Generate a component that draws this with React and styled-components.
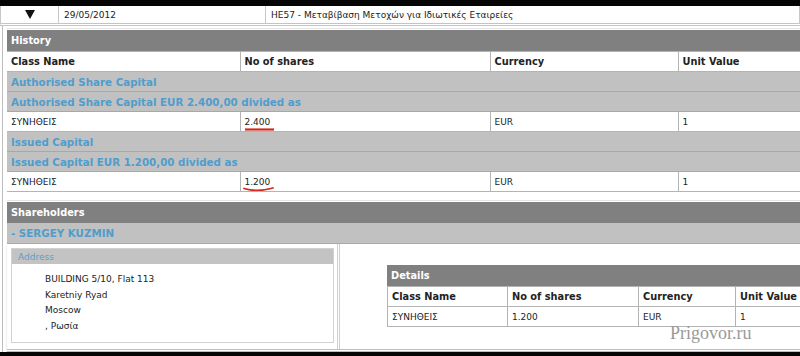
import styled, { createGlobalStyle } from 'styled-components'

const GlobalStyle = createGlobalStyle`
    html, body {
        margin: 0;
        padding: 0;
        background: #ffffff;
        overflow: hidden;
    }
    body {
        font-family: "DejaVu Sans", Verdana, sans-serif;
        font-size: 9px;
        color: #222;
    }
`

const Page = styled.div`
    width: 800px;
    height: 356px;
    display: flex;
    flex-direction: column;
    overflow: hidden;
`

const BlackBar = styled.div`
    height: ${p => p.$h}px;
    background: #050505;
    flex: none;
`

const TopRow = styled.div`
    display: grid;
    grid-template-columns: 58px 207px 1fr;
    height: 17px;
    border-left: 1px solid #c8c8c8;
    border-bottom: 3px double #c4c4c4;
    flex: none;
`

const TopCell = styled.div`
    display: flex;
    align-items: center;
    justify-content: ${p => (p.$center ? 'center' : 'flex-start')};
    padding-left: ${p => (p.$center ? 0 : 5)}px;
    border-right: 1px solid #c8c8c8;
    white-space: nowrap;
`

const Frame = styled.div`
    flex: 1;
    margin-left: 2px;
    border-left: 1px solid #bdbdbd;
    padding: 2px 0 0 4px;
    display: flex;
    flex-direction: column;
`

const Panel = styled.div`
    border-top: 1px solid #e4e4e4;
    padding-top: 1px;
`

const Header = styled.div`
    height: 21px;
    display: flex;
    align-items: center;
    padding-left: 4px;
    background: #808080;
    color: #fff;
    font-weight: bold;
    font-size: 9.8px;
`

const Table = styled.table`
    width: 100%;
    border-collapse: collapse;
    table-layout: fixed;
`

const Row = styled.tr`
    height: 20px;
    background: ${p => (p.$group ? '#c1c1c1' : '#fff')};
`

const Cell = styled.td`
    border: 1px solid ${p => (p.$group ? '#a8a8a8' : '#b4b4b4')};
    border-left: ${p => (p.$first ? 'none' : undefined)};
    border-right: ${p => (p.$last ? 'none' : undefined)};
    padding: 0 4px;
    white-space: nowrap;
    overflow: hidden;
    font-weight: ${p => (p.$bold ? 'bold' : 'normal')};
    font-size: ${p => (p.$blue ? '10.3px' : p.$bold ? '9.8px' : '9px')};
    color: ${p => (p.$blue ? '#4f9dcd' : '#222')};
    vertical-align: middle;
`

const Marked = styled.span`
    position: relative;
    display: inline-block;
`

const Stroke = styled.svg`
    position: absolute;
    left: -2px;
    top: 8px;
    overflow: visible;
`

const Gap = styled.div`
    height: 8px;
`

const Shareholder = styled.div`
    height: 20px;
    display: flex;
    align-items: center;
    padding-left: 4px;
    background: #c1c1c1;
    border-bottom: 1px solid #a8a8a8;
    color: #4f9dcd;
    font-weight: bold;
    font-size: 10.3px;
`

const Body = styled.div`
    display: grid;
    grid-template-columns: 333px 1fr;
    height: 105px;
    border-bottom: 3px double #bcbcbc;
    box-shadow: 0 2px 2px #cfcfcf;
`

const LeftCol = styled.div`
    border-right: 3px double #cfcfcf;
    padding: 4px 3px 6px 4px;
`

const AddressBox = styled.div`
    border: 1px solid #d2d2d2;
    height: 95px;
    box-sizing: border-box;
`

const AddressTitle = styled.div`
    height: 15px;
    display: flex;
    align-items: center;
    padding-left: 6px;
    background: #c3c3c3;
    color: #5a9fcc;
`

const AddressLines = styled.div`
    padding: 8px 0 0 33px;
    display: flex;
    flex-direction: column;
    line-height: 15.7px;
`

const RightCol = styled.div`
    position: relative;
    padding: 21px 0 0 47px;
`

const Watermark = styled.div`
    position: absolute;
    left: 330px;
    top: 80px;
    font-family: "Liberation Serif", "Times New Roman", serif;
    font-size: 18px;
    line-height: 1;
    color: #9a9a9a;
`

const historyRows = [
    { group: true, text: 'Authorised Share Capital' },
    { group: true, text: 'Authorised Share Capital EUR 2.400,00 divided as' },
    { name: 'ΣΥΝΗΘΕΙΣ', shares: '2.400', mark: 'line' },
    { group: true, text: 'Issued Capital' },
    { group: true, text: 'Issued Capital EUR 1.200,00 divided as' },
    { name: 'ΣΥΝΗΘΕΙΣ', shares: '1.200', mark: 'curve' },
]

const Mark = ({ kind }) => (
    <Stroke width="30" height="6">
        {kind === 'line' ? (
            <path d="M2 4.5 L31 4.5" stroke="#d22a1e" strokeWidth="2.2" fill="none" />
        ) : (
            <path d="M1 3.5 Q14 7.5 30 3" stroke="#d22a1e" strokeWidth="1.8" fill="none" strokeLinecap="round" />
        )}
    </Stroke>
)

const App = () => {
    return (
        <Page>
            <GlobalStyle />
            <BlackBar $h={6} />
            <TopRow>
                <TopCell $center>
                    <svg width="10" height="9" viewBox="0 0 10 9">
                        <path d="M0 0 L10 0 L5 9 Z" fill="#111" />
                    </svg>
                </TopCell>
                <TopCell>29/05/2012</TopCell>
                <TopCell>HE57 - Μεταβίβαση Μετοχών για Ιδιωτικές Εταιρείες</TopCell>
            </TopRow>
            <Frame>
                <Panel>
                    <Header>History</Header>
                    <Table>
                        <colgroup>
                            <col style={{ width: 233 }} />
                            <col style={{ width: 250 }} />
                            <col style={{ width: 188 }} />
                            <col />
                        </colgroup>
                        <tbody>
                            <Row>
                                <Cell $first $bold>Class Name</Cell>
                                <Cell $bold>No of shares</Cell>
                                <Cell $bold>Currency</Cell>
                                <Cell $last $bold>Unit Value</Cell>
                            </Row>
                            {historyRows.map((r, i) =>
                                r.group ? (
                                    <Row key={i} $group>
                                        <Cell $group $first $last $bold $blue colSpan={4}>{r.text}</Cell>
                                    </Row>
                                ) : (
                                    <Row key={i}>
                                        <Cell $first>{r.name}</Cell>
                                        <Cell>
                                            <Marked>
                                                {r.shares}
                                                <Mark kind={r.mark} />
                                            </Marked>
                                        </Cell>
                                        <Cell>EUR</Cell>
                                        <Cell $last>1</Cell>
                                    </Row>
                                )
                            )}
                        </tbody>
                    </Table>
                </Panel>
                <Gap />
                <Panel>
                    <Header>Shareholders</Header>
                    <Shareholder>- SERGEY KUZMIN</Shareholder>
                    <Body>
                        <LeftCol>
                            <AddressBox>
                                <AddressTitle>Address</AddressTitle>
                                <AddressLines>
                                    <span>BUILDING 5/10, Flat 113</span>
                                    <span>Karetniy Ryad</span>
                                    <span>Moscow</span>
                                    <span>, Ρωσία</span>
                                </AddressLines>
                            </AddressBox>
                        </LeftCol>
                        <RightCol>
                            <Header>Details</Header>
                            <Table>
                                <colgroup>
                                    <col style={{ width: 120 }} />
                                    <col style={{ width: 131 }} />
                                    <col style={{ width: 97 }} />
                                    <col />
                                </colgroup>
                                <tbody>
                                    <Row>
                                        <Cell $bold>Class Name</Cell>
                                        <Cell $bold>No of shares</Cell>
                                        <Cell $bold>Currency</Cell>
                                        <Cell $last $bold>Unit Value</Cell>
                                    </Row>
                                    <Row>
                                        <Cell>ΣΥΝΗΘΕΙΣ</Cell>
                                        <Cell>1.200</Cell>
                                        <Cell>EUR</Cell>
                                        <Cell $last>1</Cell>
                                    </Row>
                                </tbody>
                            </Table>
                            <Watermark>Prigovor.ru</Watermark>
                        </RightCol>
                    </Body>
                </Panel>
            </Frame>
            <BlackBar $h={5} />
        </Page>
    )
}

export default App
